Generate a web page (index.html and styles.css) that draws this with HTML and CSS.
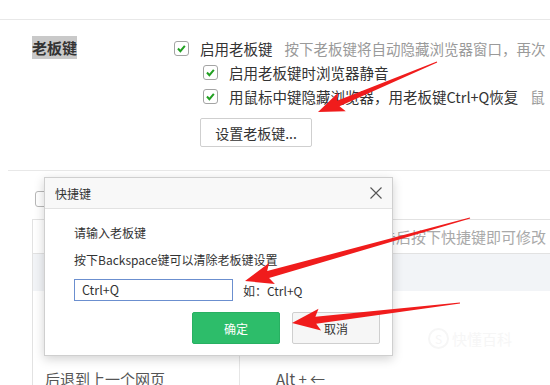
FILE: index.html
```html
<!DOCTYPE html>
<html lang="zh-CN">
<head>
    <meta charset="UTF-8">
    <meta name="viewport" content="width=device-width, initial-scale=1.0">
    <title>老板键设置</title>
    <link rel="stylesheet" href="styles.css">
</head>
<body>
    <div class="page">
        <div class="top"></div>

        <div class="boss">
            <div class="boss-label"><span class="picked">老板键</span></div>
            <div class="options">
                <div class="opt">
                    <span class="box"><svg viewBox="0 0 14 14"><path d="M3.2 7 L5.8 9.8 L10.6 4.2" /></svg></span>
                    <span>启用老板键</span>
                    <span class="hint">按下老板键将自动隐藏浏览器窗口，再次</span>
                </div>
                <div class="opt sub">
                    <span class="box"><svg viewBox="0 0 14 14"><path d="M3.2 7 L5.8 9.8 L10.6 4.2" /></svg></span>
                    <span>启用老板键时浏览器静音</span>
                </div>
                <div class="opt sub">
                    <span class="box"><svg viewBox="0 0 14 14"><path d="M3.2 7 L5.8 9.8 L10.6 4.2" /></svg></span>
                    <span>用鼠标中键隐藏浏览器，用老板键Ctrl+Q恢复</span>
                    <span class="hint">鼠</span>
                </div>
                <button class="btn-set">设置老板键...</button>
            </div>
        </div>

        <div class="divider"></div>

        <div class="lower">
            <span class="box lone"></span>
            <div class="keys">
                <div class="keys-head"><span>单击后按下快捷键即可修改</span></div>
                <div class="keys-band"></div>
                <div class="keys-row"><div class="k-name"></div><div class="k-val"></div></div>
                <div class="keys-row"><div class="k-name">后退到上一个网页</div><div class="k-val">Alt + ←</div></div>
            </div>
        </div>

        <div class="mark"><span class="mark-s">S</span>快懂百科</div>

        <div class="dialog">
            <div class="dlg-title">
                <span>快捷键</span>
                <svg class="dlg-close" viewBox="0 0 12 12"><path d="M0.5 0.5 L11.5 11.5 M11.5 0.5 L0.5 11.5" /></svg>
            </div>
            <div class="dlg-body">
                <p class="dlg-line">请输入老板键</p>
                <p class="dlg-line">按下Backspace键可以清除老板键设置</p>
                <div class="dlg-input">
                    <div class="field">Ctrl+Q</div>
                    <span>如：Ctrl+Q</span>
                </div>
                <div class="dlg-btns">
                    <button class="btn-ok">确定</button>
                    <button class="btn-cancel">取消</button>
                </div>
            </div>
        </div>

        <svg class="arrows" viewBox="0 0 550 385">
            <polygon points="437.2,62.5 339.5,106.3 345.8,111.2 318,112 338.1,92.7 337.1,100.7 436.8,61.5" />
            <polygon points="470.2,218.6 269.1,277.9 274.9,284.0 245,281 269.0,262.9 267.2,271.1 469.8,217.4" />
            <polygon points="460.1,303.6 316.2,323.7 321.1,330.6 292,323 318.5,308.8 315.4,316.7 459.9,302.4" />
        </svg>
    </div>
</body>
</html>
```

FILE: styles.css
```css
body {
    margin: 0;
    background: #fff;
    font-family: "Noto Sans CJK SC", "Noto Sans", sans-serif;
    color: #333;
}

.page {
    position: relative;
    width: 550px;
    height: 385px;
    overflow: hidden;
}

.top {
    height: 19px;
    border-bottom: 1px solid #e8e8e8;
}

/* 老板键 block */
.boss {
    display: grid;
    grid-template-columns: 142px 1fr;
    padding: 16px 0 0 32px;
}

.boss-label {
    height: 24px;
    line-height: 24px;
    font-size: 15px;
    font-weight: bold;
}

.picked {
    background: #c9c9c9;
    padding: 1px 0;
}

.options {
    display: flex;
    flex-direction: column;
    align-items: flex-start;
    min-width: 0;
}

.opt {
    display: flex;
    align-items: center;
    height: 24px;
    font-size: 14.5px;
    white-space: nowrap;
}

.opt.sub {
    margin-left: 29px;
}

.box {
    display: inline-block;
    flex-shrink: 0;
    width: 15px;
    height: 15px;
    box-sizing: border-box;
    border: 1px solid #a4a4a4;
    border-radius: 3px;
    background: #fff;
    margin-right: 11px;
}

.box svg {
    display: block;
    width: 13px;
    height: 13px;
}

.box path {
    fill: none;
    stroke: #22a022;
    stroke-width: 2.2;
}

.hint {
    color: #9a9a9a;
    margin-left: 12px;
}

.btn-set {
    margin: 10px 0 0 26px;
    width: 112px;
    height: 29px;
    font-family: inherit;
    font-size: 14px;
    color: #333;
    background: #fff;
    border: 1px solid #cfcfcf;
    border-radius: 2px;
    padding: 0;
}

.divider {
    margin: 23px 0 0 8px;
    border-top: 1px solid #e8e8e8;
}

/* shortcut table behind the dialog */
.lower {
    padding-top: 20px;
}

.box.lone {
    display: block;
    width: 16px;
    height: 16px;
    margin-left: 35px;
    border-color: #b8b8b8;
}

.keys {
    margin: 12px 0 0 32px;
    border-left: 1px solid #e2e2e2;
    border-top: 1px solid #e2e2e2;
}

.keys-head {
    height: 33px;
    line-height: 33px;
    border-bottom: 1px solid #e2e2e2;
    padding-left: 333px;
    font-size: 15px;
    color: #a9a9a9;
    white-space: nowrap;
}

.keys-band {
    height: 37px;
    background: #f2f4f7;
}

.keys-row {
    display: flex;
    height: 77px;
    font-size: 15px;
    color: #555;
}

.k-name {
    width: 207px;
    padding-left: 12px;
    border-right: 1px solid #e6e6e6;
    box-sizing: border-box;
}

.k-val {
    padding-left: 36px;
}

.keys-row + .keys-row {
    height: 36px;
    line-height: 22px;
}

/* faint watermark */
.mark {
    position: absolute;
    left: 428px;
    top: 328px;
    font-size: 15px;
    color: #f6f6f6;
    display: flex;
    align-items: center;
}

.mark-s {
    width: 17px;
    height: 17px;
    border-radius: 50%;
    border: 2px solid #f6f6f6;
    font-size: 12px;
    line-height: 17px;
    text-align: center;
    margin-right: 3px;
}

/* dialog */
.dialog {
    position: absolute;
    left: 44px;
    top: 177px;
    width: 349px;
    height: 179px;
    box-sizing: border-box;
    border: 1px solid #cfcfcf;
    background: #fff;
    box-shadow: 0 3px 10px rgba(0, 0, 0, 0.18);
    font-size: 12px;
}

.dlg-title {
    height: 30px;
    display: flex;
    align-items: center;
    justify-content: space-between;
    padding: 0 10px 0 10px;
    background: #f8f8f8;
    border-bottom: 1px solid #e2e2e2;
}

.dlg-close {
    width: 12px;
    height: 12px;
}

.dlg-close path {
    stroke: #555;
    stroke-width: 1.1;
}

.dlg-body {
    padding: 15px 0 0 29px;
}

.dlg-line {
    margin: 0 0 9px;
    line-height: 18px;
}

.dlg-input {
    display: flex;
    align-items: center;
    margin-top: 10px;
}

.field {
    width: 159px;
    height: 22px;
    box-sizing: border-box;
    border: 1px solid #6b8fcf;
    padding-left: 7px;
    line-height: 20px;
    font-size: 12.5px;
    margin-right: 10px;
}

.dlg-btns {
    display: flex;
    gap: 12px;
    margin: 11px 0 0 118px;
}

.dlg-btns button {
    width: 88px;
    height: 32px;
    font-family: inherit;
    font-size: 12px;
    border-radius: 2px;
    padding: 0;
}

.btn-ok {
    background: #2dbd6a;
    border: 1px solid #28b062;
    color: #fff;
}

.btn-cancel {
    background: #f6f6f6;
    border: 1px solid #cfcfcf;
    color: #333;
}

.arrows {
    position: absolute;
    left: 0;
    top: 0;
    width: 550px;
    height: 385px;
    pointer-events: none;
}

.arrows polygon {
    fill: #f01c1c;
}
```
